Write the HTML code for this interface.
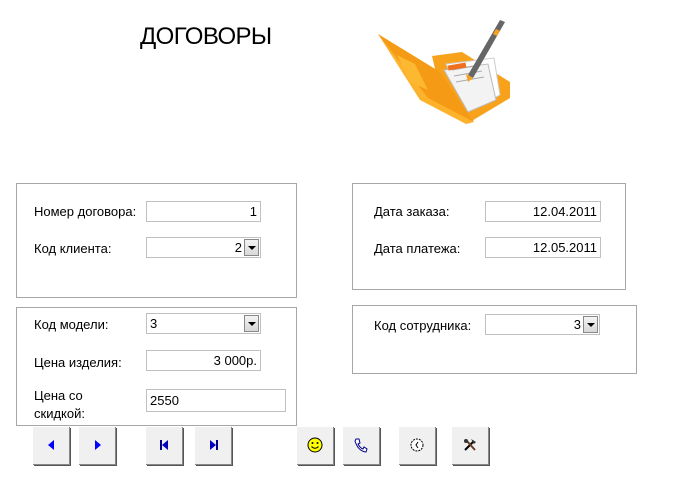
<!DOCTYPE html>
<html><head><meta charset="utf-8"><style>
body{margin:0;width:680px;height:492px;background:#fff;position:relative;overflow:hidden;font-family:"Liberation Sans",sans-serif;font-size:13px;color:#000}
.a{position:absolute}
.box{position:absolute;border:1px solid #a6a6a6;box-sizing:border-box}
.in{position:absolute;border:1px solid #c0c0c0;box-sizing:border-box;height:21px;line-height:19px;padding:0 3px;text-align:right;background:#fff}
.dd{position:absolute;top:1px;right:1px;width:15px;height:17px;background:linear-gradient(#f4f4f4,#d8d8d8);border:1px solid #888;box-sizing:border-box}
.dd:after{content:"";position:absolute;left:3px;top:6px;border-left:4px solid transparent;border-right:4px solid transparent;border-top:4px solid #000}
.btn{position:absolute;top:426px;width:37px;height:38px;background:#f0f0f0;border-top:1px solid #fff;border-left:1px solid #fff;box-shadow:1px 1px 0 #888,2px 2px 0 #555;box-sizing:border-box}
.btn svg{position:absolute;left:10px;top:10px}
</style></head><body>
<div class="a" style="left:140px;top:23px;font-size:24px;letter-spacing:-0.6px">ДОГОВОРЫ</div>
<svg class="a" style="left:375px;top:14px" width="140" height="112" viewBox="375 14 140 112">
<polygon points="432,56 462,52 510,82 510,98 470,122 440,90" fill="#f8a21c"/>
<polygon points="446,64 494,58 500,95 470,110" fill="#fff" stroke="#ccc"/>
<polygon points="444,70 488,64 496,100 468,112" fill="#f3f3f3" stroke="#bbb"/>
<line x1="452" y1="70" x2="480" y2="65" stroke="#aaa"/><line x1="454" y1="76" x2="482" y2="71" stroke="#aaa"/><line x1="456" y1="82" x2="484" y2="77" stroke="#aaa"/>
<rect x="448" y="64" width="18" height="5" fill="#f07020" transform="rotate(-10 457 66)"/>
<polygon points="378,34 440,72 474,122 466,124 420,100" fill="#fdb22c"/>
<polygon points="378,34 440,72 474,122 428,98" fill="#f59a14"/>
<polygon points="397,55 415,64 428,90 410,82" fill="#fbb830"/>
<polygon points="468,75 500,20 505,22 473,78" fill="#666"/>
<polygon points="466,74 473,78 468,82" fill="#f7a020"/>
<polygon points="496,29 500,31 497,36 493,34" fill="#f7a020"/>
</svg>

<div class="box" style="left:16px;top:183px;width:281px;height:115px"></div>
<div class="a" style="left:34px;top:204px">Номер договора:</div>
<div class="in" style="left:146px;top:201px;width:115px">1</div>
<div class="a" style="left:34px;top:241px">Код клиента:</div>
<div class="in" style="left:146px;top:237px;width:115px;padding-right:18px">2<div class="dd"></div></div>

<div class="box" style="left:16px;top:307px;width:281px;height:119px"></div>
<div class="a" style="left:34px;top:317px">Код модели:</div>
<div class="in" style="left:146px;top:313px;width:115px;text-align:left">3<div class="dd"></div></div>
<div class="a" style="left:34px;top:355px">Цена изделия:</div>
<div class="in" style="left:146px;top:350px;width:115px">3 000р.</div>
<div class="a" style="left:34px;top:387px;line-height:18px">Цена со<br>скидкой:</div>
<div class="in" style="left:146px;top:389px;width:140px;height:23px;line-height:21px;text-align:left">2550</div>

<div class="box" style="left:352px;top:183px;width:274px;height:107px"></div>
<div class="a" style="left:374px;top:204px">Дата заказа:</div>
<div class="in" style="left:485px;top:201px;width:116px">12.04.2011</div>
<div class="a" style="left:374px;top:241px">Дата платежа:</div>
<div class="in" style="left:485px;top:237px;width:116px">12.05.2011</div>

<div class="box" style="left:352px;top:305px;width:285px;height:69px"></div>
<div class="a" style="left:374px;top:318px">Код сотрудника:</div>
<div class="in" style="left:485px;top:314px;width:115px;padding-right:18px">3<div class="dd"></div></div>

<div class="btn" style="left:32px"><svg width="16" height="16"><polygon points="11,3 5,8 11,13" fill="#0000ff"/></svg></div>
<div class="btn" style="left:78px"><svg width="16" height="16"><polygon points="6,3 12,8 6,13" fill="#0000ff"/></svg></div>
<div class="btn" style="left:145px"><svg width="16" height="16"><rect x="4" y="3" width="2" height="10" fill="#000080"/><polygon points="12,3 6,8 12,13" fill="#0000c0"/></svg></div>
<div class="btn" style="left:194px"><svg width="16" height="16"><rect x="11" y="3" width="2" height="10" fill="#000080"/><polygon points="5,3 11,8 5,13" fill="#0000c0"/></svg></div>
<div class="btn" style="left:296px"><svg width="16" height="16"><circle cx="8" cy="8" r="7" fill="#ff0" stroke="#000"/><circle cx="5.5" cy="6" r="1" fill="#000"/><circle cx="10.5" cy="6" r="1" fill="#000"/><path d="M4.5 9.5 Q8 13 11.5 9.5" stroke="#000" fill="none"/></svg></div>
<div class="btn" style="left:342px"><svg width="16" height="16"><path d="M3 2 L6 2 L7 6 L5 7 Q7 11 10 12 L11 10 L14 12 L13 15 Q5 14 2 4 Z" fill="#fff" stroke="#00008b"/></svg></div>
<div class="btn" style="left:398px"><svg width="16" height="16"><circle cx="8" cy="8" r="6" fill="#fff" stroke="#000" stroke-dasharray="2 1"/><path d="M9 5 L7 8 L9 11" stroke="#000" fill="none"/></svg></div>
<div class="btn" style="left:451px"><svg width="16" height="16"><path d="M3 13 L12 4" stroke="#000" stroke-width="2"/><path d="M4 3 L13 13" stroke="#6b3a1e" stroke-width="2"/><path d="M9 2 L14 5 L12 7 Z" fill="#333"/><circle cx="4" cy="4" r="2" fill="#333"/></svg></div>
</body></html>
